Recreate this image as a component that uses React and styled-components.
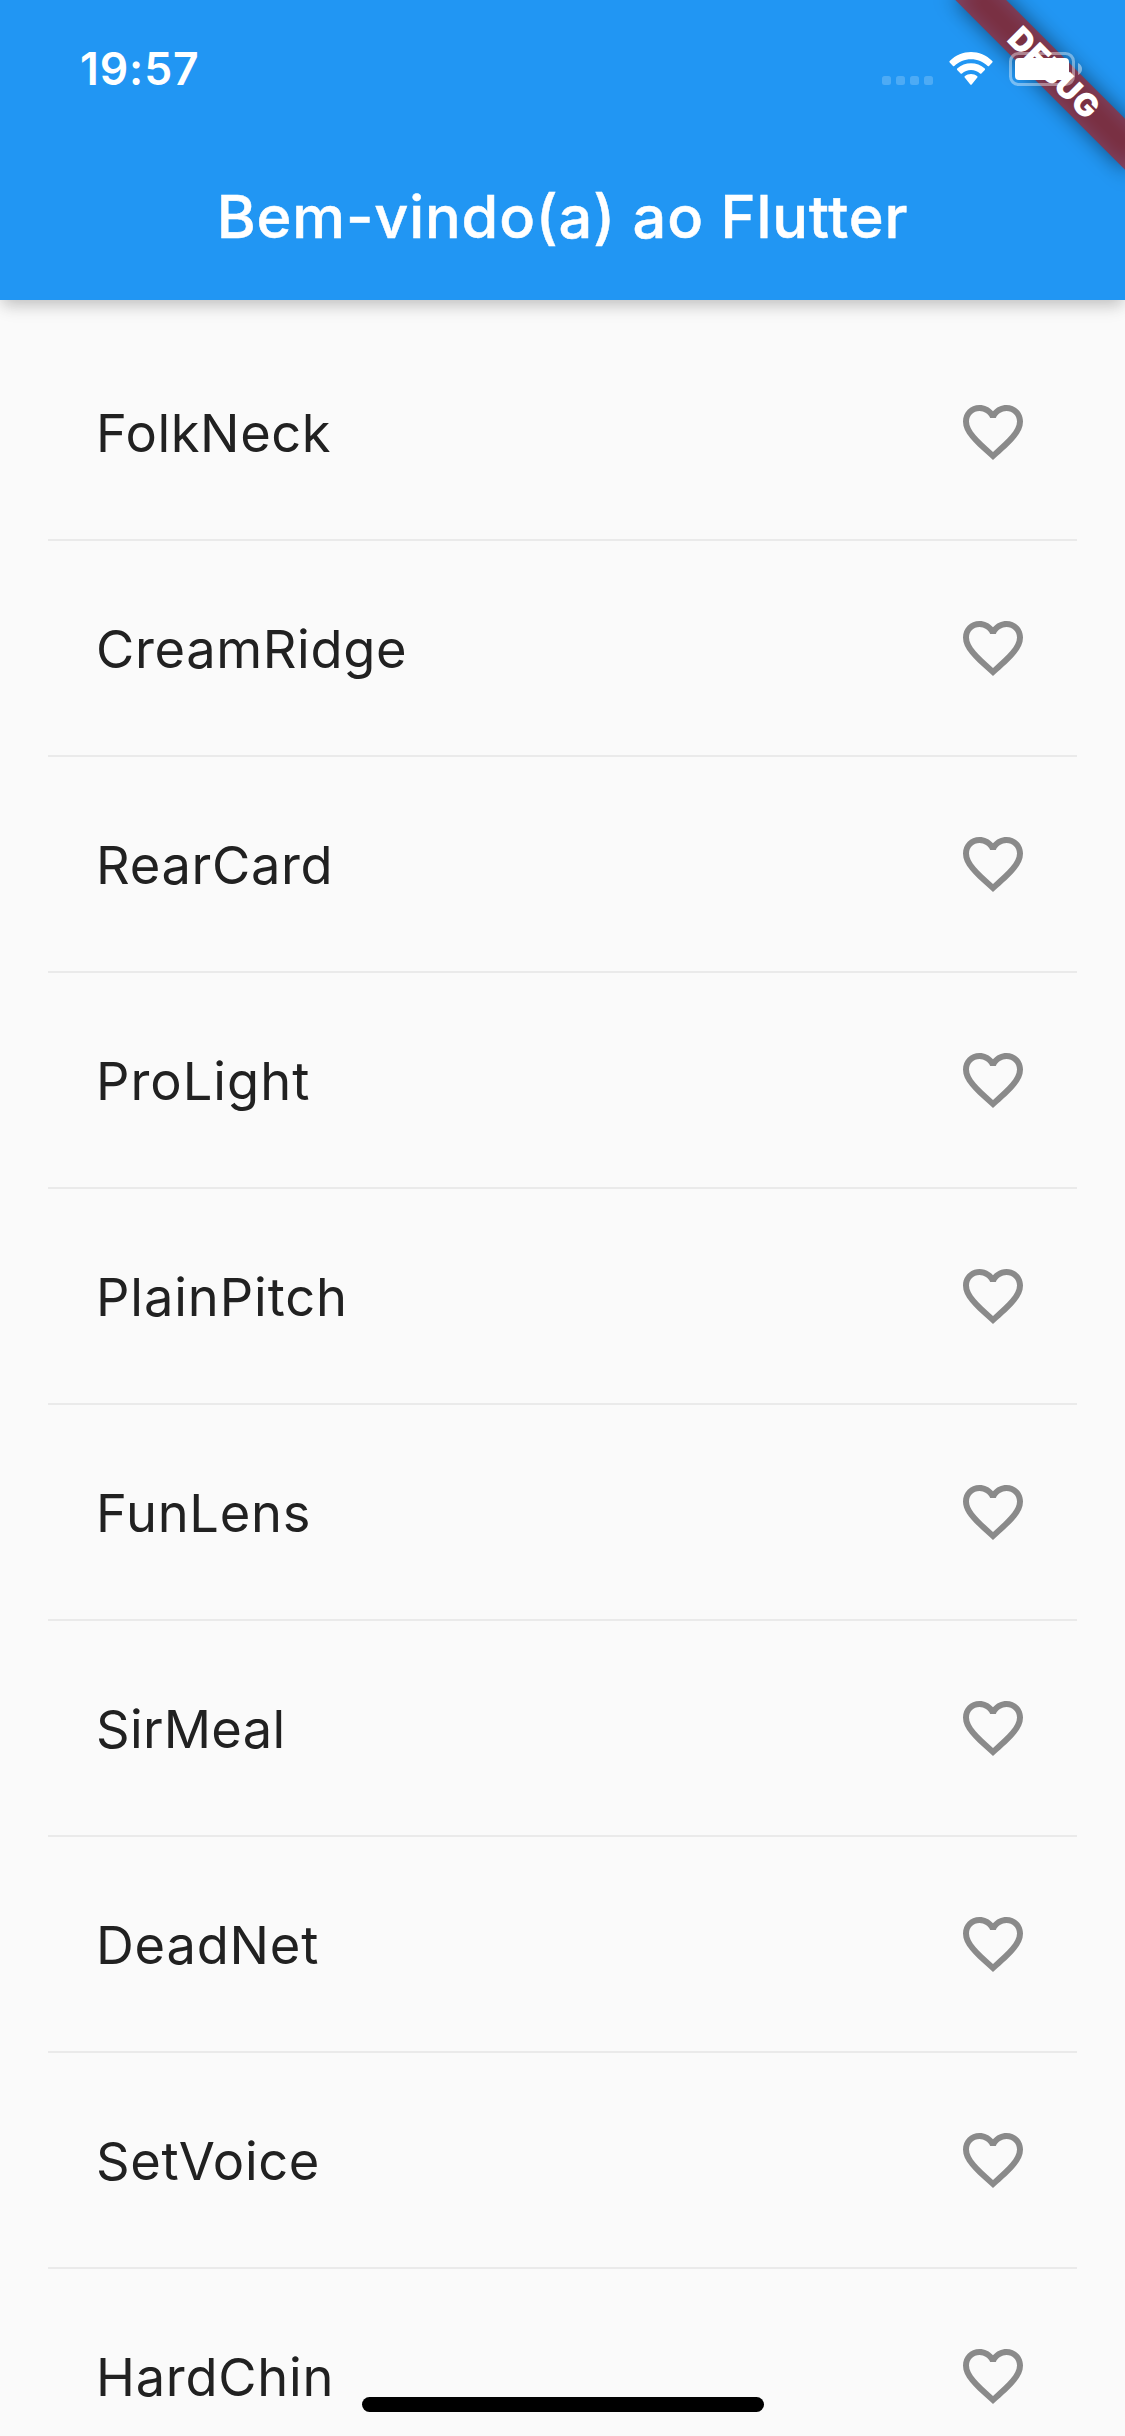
import React from "react";
import styled, { createGlobalStyle } from "styled-components";

const GlobalStyle = createGlobalStyle`
  * { box-sizing: border-box; }
  html, body { margin: 0; padding: 0; background: #fafafa; }
  body { overflow: hidden; }
`;

const Screen = styled.div`
  position: relative;
  width: 1125px;
  height: 2436px;
  overflow: hidden;
  display: flex;
  flex-direction: column;
  background: #fafafa;
  font-family: Inter, "Liberation Sans", sans-serif;
`;

const AppBar = styled.header`
  position: relative;
  flex: none;
  height: 300px;
  display: flex;
  flex-direction: column;
  background: #2196f3;
  box-shadow: 0 8px 14px -3px rgba(0, 0, 0, 0.18), 0 4px 22px rgba(0, 0, 0, 0.08);
`;

const StatusBar = styled.div`
  position: relative;
  z-index: 2;
  height: 132px;
  display: flex;
  justify-content: space-between;
  padding: 0 43px 0 80px;
  color: #fff;
`;

const Clock = styled.time`
  margin-top: 42px;
  font-size: 44.5px;
  line-height: 54px;
  font-weight: 600;
  letter-spacing: ${(p) => p.$spacing}px;
`;

const StatusIcons = styled.div`
  display: flex;
  align-items: flex-start;
  padding-top: 52px;
`;

const SignalDots = styled.div`
  display: flex;
  gap: 5px;
  margin: 24px 15px 0 0;
`;

const Dot = styled.i`
  width: 9px;
  height: 9px;
  border-radius: 2.5px;
  background: rgba(255, 255, 255, 0.2);
`;

const WifiIcon = styled.svg`
  width: 46px;
  height: 34px;
  margin-right: 15px;
  fill: #fff;
`;

const BatteryIcon = styled.svg`
  width: 73px;
  height: 34px;
`;

const TitleBar = styled.div`
  height: 168px;
  display: flex;
  align-items: center;
  justify-content: center;
`;

const Title = styled.h1`
  margin: 0;
  color: #fff;
  font-size: 59.4px;
  line-height: 72px;
  font-weight: 500;
  -webkit-text-stroke: 0.5px #fff;
  white-space: nowrap;
  letter-spacing: ${(p) => p.$spacing}px;
`;

const BannerClip = styled.div`
  position: absolute;
  z-index: 1;
  top: 0;
  right: 0;
  width: 240px;
  height: 240px;
  overflow: hidden;
  pointer-events: none;
`;

const Banner = styled.div`
  position: absolute;
  top: 84px;
  left: 120px;
  width: 240px;
  height: 36px;
  transform-origin: 120px -84px;
  transform: rotate(45deg);
  display: flex;
  align-items: center;
  justify-content: center;
  color: #fff;
  font-size: 32px;
  line-height: 36px;
  font-weight: 900;

  &::before {
    content: "";
    position: absolute;
    inset: 0;
    background: rgba(0, 0, 0, 0.5);
    filter: blur(10.9px);
  }

  &::after {
    content: "";
    position: absolute;
    inset: 0;
    background: rgba(183, 28, 28, 0.627);
  }
`;

const BannerText = styled.span`
  position: relative;
  z-index: 1;
  padding-left: 3px;
  letter-spacing: ${(p) => p.$spacing}px;
`;

const List = styled.ul`
  list-style: none;
  margin: 0;
  padding: 48px 48px 0;
  flex: 1;
`;

const Tile = styled.li`
  height: 216px;
  display: flex;
  flex-direction: column;

  &::after {
    content: "";
    height: 2px;
    margin-top: 23px;
    background: #eaeaea;
  }
`;

const TileRow = styled.div`
  height: 168px;
  padding: 0 48px;
  display: flex;
  align-items: center;
  justify-content: space-between;
`;

const Name = styled.span`
  padding-top: 2px;
  color: #212121;
  font-size: 52.4px;
  line-height: 64px;
  font-weight: 400;
  letter-spacing: ${(p) => p.$spacing}px;
`;

const Heart = styled.svg`
  width: 72px;
  height: 72px;
  fill: #8a8a8a;
`;

const HomeIndicator = styled.div`
  position: absolute;
  z-index: 3;
  bottom: 24px;
  left: 362px;
  width: 402px;
  height: 15px;
  border-radius: 8px;
  background: #000;
`;

const names = [
  ["FolkNeck", 0.6],
  ["CreamRidge", 0.65],
  ["RearCard", 0.7],
  ["ProLight", 1],
  ["PlainPitch", 0.9],
  ["FunLens", 0.75],
  ["SirMeal", 0.3],
  ["DeadNet", 0.8],
  ["SetVoice", 0.65],
  ["HardChin", 0.75],
];

function Wifi() {
  return (
    <WifiIcon viewBox="0 0 46 34">
      <path d="M23 7.2c6.400 0 12.300 2.500 16.700 6.700.4.4.9.400 1.300 0l3.300-3.400c.4-.4.4-1 0-1.400C32.400-2.900 13.600-2.900 1.700 9.100c-.4.4-.4 1 0 1.400L5 13.900c.4.4.9.400 1.300 0C10.700 9.700 16.600 7.200 23 7.200z" />
      <path d="M23 18c3.500 0 6.600 1.300 9 3.400.4.4 1 .4 1.400 0l3.400-3.400c.4-.4.4-1 0-1.400-7.600-7.100-20-7.100-27.600 0-.4.4-.4 1 0 1.400l3.400 3.400c.4.4 1 .4 1.400 0 2.400-2.100 5.500-3.400 9-3.400z" />
      <path d="M29.300 25.600c.4-.4.4-1 0-1.400-3.600-3-9-3-12.600 0-.4.4-.4 1 0 1.400l5.600 6.900c.4.4 1 .4 1.400 0z" />
    </WifiIcon>
  );
}

function Battery() {
  return (
    <BatteryIcon viewBox="0 0 73 34">
      <rect x="1.500" y="1.500" width="63" height="31" rx="8" fill="none" stroke="#fff" strokeWidth="3" opacity="0.4" />
      <path d="M69 11v12c2.500-1.100 4-3.400 4-6s-1.500-4.900-4-6z" fill="#fff" opacity="0.45" />
      <rect x="6" y="6" width="54" height="22" rx="4" fill="#fff" />
    </BatteryIcon>
  );
}

function HeartOutline() {
  return (
    <Heart viewBox="0 0 24 24">
      <path d="M16.5 3c-1.740 0-3.410.81-4.500 2.090C10.910 3.810 9.240 3 7.500 3 4.420 3 2 5.420 2 8.500c0 3.780 3.400 6.860 8.550 11.540L12 21.350l1.450-1.320C18.600 15.360 22 12.280 22 8.500 22 5.420 19.580 3 16.500 3zm-4.400 15.550l-.1.1-.1-.1C7.140 14.240 4 11.390 4 8.500 4 6.500 5.500 5 7.500 5c1.540 0 3.040.99 3.570 2.360h1.870C13.460 5.990 14.960 5 16.500 5c2 0 3.500 1.500 3.500 3.500 0 2.890-3.140 5.740-7.900 10.050z" />
    </Heart>
  );
}

export default function App() {
  return (
    <Screen>
      <GlobalStyle />
      <AppBar>
        <StatusBar>
          <Clock $spacing={0.9}>19:57</Clock>
          <StatusIcons>
            <SignalDots>
              <Dot />
              <Dot />
              <Dot />
              <Dot />
            </SignalDots>
            <Wifi />
            <Battery />
          </StatusIcons>
        </StatusBar>
        <TitleBar>
          <Title $spacing={0.85}>Bem-vindo(a) ao Flutter</Title>
        </TitleBar>
        <BannerClip>
          <Banner>
            <BannerText $spacing={0.6}>DEBUG</BannerText>
          </Banner>
        </BannerClip>
      </AppBar>
      <List>
        {names.map(([name, spacing]) => (
          <Tile key={name}>
            <TileRow>
              <Name $spacing={spacing}>{name}</Name>
              <HeartOutline />
            </TileRow>
          </Tile>
        ))}
      </List>
      <HomeIndicator />
    </Screen>
  );
}
